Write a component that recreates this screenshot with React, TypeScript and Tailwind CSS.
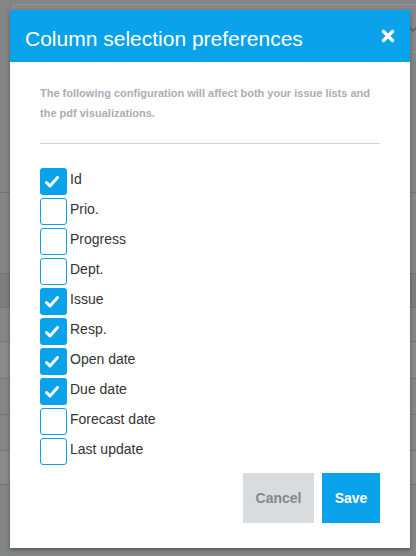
import React from "react";

const items: { label: string; checked: boolean }[] = [
  { label: "Id", checked: true },
  { label: "Prio.", checked: false },
  { label: "Progress", checked: false },
  { label: "Dept.", checked: false },
  { label: "Issue", checked: true },
  { label: "Resp.", checked: true },
  { label: "Open date", checked: true },
  { label: "Due date", checked: true },
  { label: "Forecast date", checked: false },
  { label: "Last update", checked: false },
];

function Box({ checked }: { checked: boolean }) {
  return checked ? (
    <div className="w-[27px] h-[27px] shrink-0 rounded-[3px] bg-[#0aa2ea] flex items-center justify-center">
      <svg width="14" height="12" viewBox="0 0 14 12" className="-ml-[4px]">
        <path d="M1.5 6.5 L5 10 L12.5 1.5" fill="none" stroke="#fff" strokeWidth="3" strokeLinecap="round" strokeLinejoin="round" />
      </svg>
    </div>
  ) : (
    <div className="w-[27px] h-[27px] shrink-0 rounded-[3px] border border-[#0aa2ea] bg-white" />
  );
}

export default function App() {
  return (
    <div className="relative w-[416px] h-[556px] overflow-hidden bg-[#848586] font-['Liberation_Sans',Arial,sans-serif]">
      {/* background page under the overlay */}
      <div className="pt-[4px] pl-[13px]">
        <div className="relative h-[49px] border-t border-l border-b border-[#929394] bg-[#868788]">
          <svg className="absolute right-[-2px] top-[20px]" width="10" height="8" viewBox="0 0 10 8">
            <path d="M1 2 L5 6 L9 2" fill="none" stroke="#5d5e5f" strokeWidth="1.5" />
          </svg>
        </div>
      </div>
      <div className="h-[140px] border-b border-[#747576]" />
      <div className="h-[81px] border-b border-[#747576]" />
      <div className="h-[34px] bg-[#7b7d7e] border-b border-[#747576]" />
      <div className="h-[34px] bg-[#858687] border-b border-[#747576]" />
      <div className="h-[37px] bg-[#8a8a8b] border-b border-[#747576]" />
      <div className="h-[36px] bg-[#858687] border-b border-[#747576]" />
      <div className="h-[36px] bg-[#858687] border-b border-[#747576]" />
      <div className="h-[34px] bg-[#8a8a8b] border-b border-[#747576]" />

      {/* modal */}
      <div className="absolute left-[10px] top-[10px] w-[400px] bg-white shadow-[0_2px_4px_rgba(0,0,0,0.35)]">
        <div className="h-[52px] bg-[#0aa2ea] flex items-start justify-between pl-[15px] pr-[14px] pt-[17px]">
          <h1 className="text-[21px] leading-[24px] text-white">Column selection preferences</h1>
          <svg width="16" height="16" viewBox="0 0 16 16" className="mt-[1px]">
            <path d="M2.5 2.5 L13.5 13.5 M13.5 2.5 L2.5 13.5" stroke="#fff" strokeWidth="3.2" strokeLinecap="butt" />
          </svg>
        </div>
        <div className="px-[30px] pt-[21px] pb-[25px]">
          <p className="text-[11px] leading-[20px] font-bold text-[#a9aeb4]">
            The following configuration will affect both your issue lists and the pdf visualizations.
          </p>
          <div className="mt-[20px] h-px bg-[#d0d2d4]" />
          <div className="mt-[24px] flex flex-col gap-[3px]">
            {items.map((it) => (
              <label key={it.label} className="flex items-start gap-[3px]">
                <Box checked={it.checked} />
                <span className="text-[14px] leading-[20px] pt-[1px] text-[#333]">{it.label}</span>
              </label>
            ))}
          </div>
          <div className="mt-[8px] flex justify-end gap-[8px]">
            <button className="w-[71px] h-[50px] bg-[#d9dcdf] text-[#82878c] text-[14px] font-bold">Cancel</button>
            <button className="w-[58px] h-[50px] bg-[#0aa2ea] text-white text-[14px] font-bold">Save</button>
          </div>
        </div>
      </div>
    </div>
  );
}
